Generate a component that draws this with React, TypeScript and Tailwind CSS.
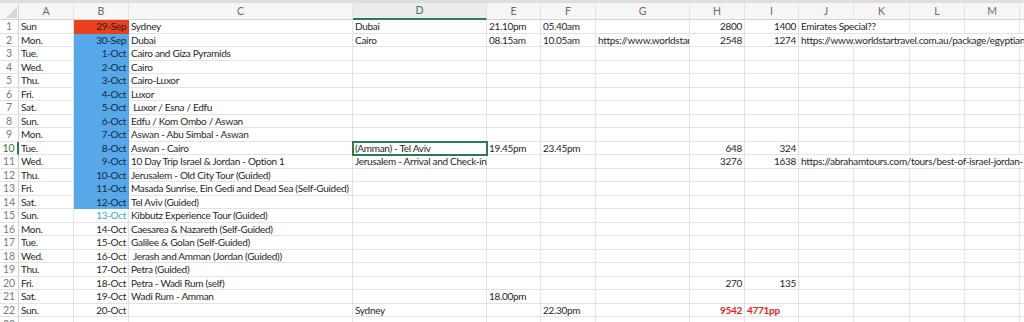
import React from "react";

const W = [
  "w-[19px]",
  "w-[55px]",
  "w-[55px]",
  "w-[224px]",
  "w-[134px]",
  "w-[54px]",
  "w-[55px]",
  "w-[94px]",
  "w-[55px]",
  "w-[54px]",
  "w-[55px]",
  "w-[56px]",
  "w-[55px]",
  "w-[55px]",
  "w-[60px]",
];

const HEAD = ["", "A", "B", "C", "D", "E", "F", "G", "H", "I", "J", "K", "L", "M", ""];

type Row = string[];

const ROWS: Row[] = [
  ["Sun", "29-Sep", "Sydney", "Dubai", "21.10pm", "05.40am", "", "2800", "1400", "Emirates Special??"],
  ["Mon.", "30-Sep", "Dubai", "Cairo", "08.15am", "10.05am", "https://www.worldstartravel.com.au", "2548", "1274", "https://www.worldstartravel.com.au/package/egyptian-highlights"],
  ["Tue.", "1-Oct", "Cairo and Giza Pyramids"],
  ["Wed.", "2-Oct", "Cairo"],
  ["Thu.", "3-Oct", "Cairo-Luxor"],
  ["Fri.", "4-Oct", "Luxor"],
  ["Sat.", "5-Oct", "\u00a0Luxor / Esna / Edfu"],
  ["Sun.", "6-Oct", "Edfu / Kom Ombo / Aswan"],
  ["Mon.", "7-Oct", "Aswan - Abu Simbal - Aswan"],
  ["Tue.", "8-Oct", "Aswan - Cairo", "(Amman) - Tel Aviv", "19.45pm", "23.45pm", "", "648", "324"],
  ["Wed.", "9-Oct", "10 Day Trip Israel & Jordan - Option 1", "Jerusalem - Arrival and Check-in", "", "", "", "3276", "1638", "https://abrahamtours.com/tours/best-of-israel-jordan-10-days"],
  ["Thu.", "10-Oct", "Jerusalem - Old City Tour (Guided)"],
  ["Fri.", "11-Oct", "Masada Sunrise, Ein Gedi and Dead Sea (Self-Guided)"],
  ["Sat.", "12-Oct", "Tel Aviv (Guided)"],
  ["Sun.", "13-Oct", "Kibbutz Experience Tour (Guided)"],
  ["Mon.", "14-Oct", "Caesarea & Nazareth (Self-Guided)"],
  ["Tue.", "15-Oct", "Galilee & Golan (Self-Guided)"],
  ["Wed.", "16-Oct", "\u00a0Jerash and Amman (Jordan (Guided))"],
  ["Thu.", "17-Oct", "Petra (Guided)"],
  ["Fri.", "18-Oct", "Petra - Wadi Rum (self)", "", "", "", "", "270", "135"],
  ["Sat.", "19-Oct", "Wadi Rum - Amman", "", "18.00pm"],
  ["Sun.", "20-Oct", "", "Sydney", "", "22.30pm", "", "9542", "4771pp"],
];

const GRID = "border-[#e3e3e3]";

function DataCell({ r, c, v }: { r: number; c: number; v: string }) {
  const col = c - 1; // 0 = A
  let cls = `shrink-0 h-full border-r border-b ${GRID} flex items-center px-[2px] whitespace-nowrap`;
  let txt = "text-[#1f1f1f]";
  let align = "justify-start";
  let spanCls = "";
  const isNum = /^\d+$/.test(v);

  if (col === 1) {
    align = "justify-end";
    if (r === 1) {
      cls = `shrink-0 h-full border-r border-b border-[#e9411e] bg-[#e9411e] flex items-center px-[2px] whitespace-nowrap`;
      txt = "text-[#2a1a14]";
    } else if (r >= 2 && r <= 14) {
      cls = `shrink-0 h-full border-r border-b border-[#56a8e9] bg-[#56a8e9] flex items-center px-[2px] whitespace-nowrap`;
      txt = "text-[#14273d]";
    } else if (r === 15) {
      txt = "text-[#3aa0da]";
    }
  }
  if ((col === 7 || col === 8) && isNum) align = "justify-end";
  if (r === 22 && (col === 7 || col === 8)) {
    txt = "text-[#e2231a] font-bold";
  }
  if (col === 6 && v) {
    cls += " overflow-hidden";
  }
  if (col === 9 && v) {
    spanCls = "relative z-10 bg-white h-full flex items-center pr-[2px]";
  }
  let outline = "";
  if (r === 10 && col === 3) {
    outline = " relative z-20 outline-2 outline-[#2f7a55] -outline-offset-1";
  }

  return (
    <div className={`${W[c]} ${cls} ${align} ${txt}${outline}`}>
      {v ? spanCls ? <span className={spanCls}>{v}</span> : <span>{v}</span> : null}
    </div>
  );
}

export default function App() {
  return (
    <div
      className="w-[1024px] h-[322px] overflow-hidden bg-white text-[10px] leading-none"
      style={{ fontFamily: "Lato, 'Open Sans', sans-serif" }}
    >
      {/* header row */}
      <div className="flex h-[20px] border-t-[3px] border-[#dedede] bg-[#f6f6f6] text-[10.5px]">
        {HEAD.map((h, i) => {
          if (i === 0) {
            return (
              <div key={i} className={`${W[0]} shrink-0 h-full border-r border-b border-[#d4d4d4] flex items-end justify-end`}>
                <svg width="11" height="11" viewBox="0 0 11 11" className="mb-[1px] mr-[1px]">
                  <polygon points="11,0 11,11 0,11" fill="#d6d6d6" />
                </svg>
              </div>
            );
          }
          const sel = h === "D";
          return (
            <div
              key={i}
              className={`${W[i]} shrink-0 h-full border-r border-[#e4e4e4] flex items-center justify-center ${
                sel
                  ? "bg-[#ececec] text-[#2f7a55] border-b-2 border-b-[#2f7a55]"
                  : "text-[#6a6a6a] border-b border-b-[#d4d4d4]"
              }`}
            >
              {h}
            </div>
          );
        })}
      </div>
      {ROWS.map((row, ri) => {
        const r = ri + 1;
        return (
          <div key={r} className="flex h-[13.5px]">
            <div
              className={`${W[0]} shrink-0 h-full border-b border-[#e3e3e3] flex items-center justify-center text-[10.5px] ${
                r === 10
                  ? "text-[#2f7a55] border-r-2 border-r-[#2f7a55]"
                  : "text-[#7a7a7a] border-r border-r-[#d4d4d4]"
              }`}
            >
              {r}
            </div>
            <div className="flex h-full tracking-[-0.3px]">
              {Array.from({ length: 14 }).map((_, ci) => (
                <DataCell key={ci} r={r} c={ci + 1} v={row[ci] ?? ""} />
              ))}
            </div>
          </div>
        );
      })}
      <div className="flex h-[13.5px]">
        <div className={`${W[0]} shrink-0 h-full border-r border-[#d4d4d4] flex items-center justify-center text-[#7a7a7a] text-[10.5px]`}>
          23
        </div>
        {Array.from({ length: 14 }).map((_, ci) => (
          <div key={ci} className={`${W[ci + 1]} shrink-0 h-full border-r ${GRID}`} />
        ))}
      </div>
    </div>
  );
}
